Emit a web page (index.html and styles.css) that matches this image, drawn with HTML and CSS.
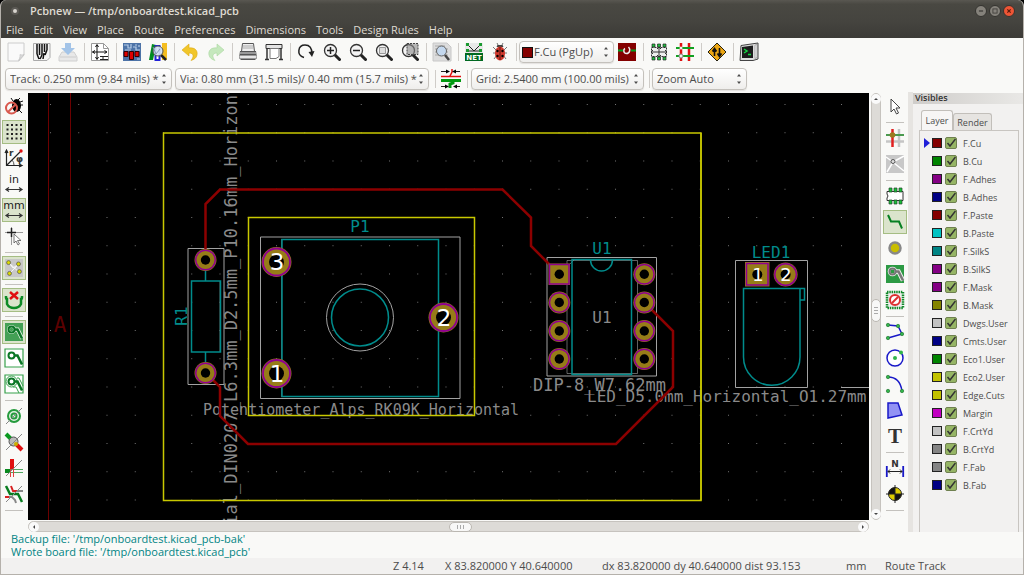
FILE: index.html
```html
<!DOCTYPE html>
<html lang="en">
<head>
<meta charset="utf-8">
<title>Pcbnew — /tmp/onboardtest.kicad_pcb</title>
<link rel="stylesheet" href="styles.css">
</head>
<body>
<svg class="defs" aria-hidden="true">
  <defs>
    <symbol id="spin" viewBox="0 0 6 12"><path d="M1 3.500 3 1l2 2.500zM1 8.500 3 11l2-2.500z" fill="#4c4c4c"/></symbol>
    <symbol id="lens" viewBox="0 0 18 18"><path d="m11.500 11.500 5 5" stroke="#222" stroke-width="3" stroke-linecap="round"/><circle cx="7.500" cy="7.500" r="6" fill="#f4f4f4" stroke="#333" stroke-width="1.300"/></symbol>
    <symbol id="track" viewBox="0 0 18 18"><circle cx="6.500" cy="6.500" r="3" fill="none" stroke-width="2"/><path d="M9.500 6.500h3l4.500 9" fill="none" stroke-width="2.500"/></symbol>
  </defs>
</svg>

<div class="window">
  <header class="titlebar">
    <span class="app-dot"></span>
    <h1 class="title">Pcbnew — /tmp/onboardtest.kicad_pcb</h1>
    <div class="window-buttons">
      <button class="wbtn" aria-label="Minimize"><svg viewBox="0 0 12 12"><path d="M3.500 6h5" stroke="#3c3b37" stroke-width="1.500"/></svg></button>
      <button class="wbtn" aria-label="Maximize"><svg viewBox="0 0 12 12"><rect x="3.500" y="3.500" width="5" height="5" fill="none" stroke="#3c3b37"/></svg></button>
      <button class="wbtn close" aria-label="Close"><svg viewBox="0 0 12 12"><path d="m4 4 4 4m0-4-4 4" stroke="#5a1a0c" stroke-width="1.400"/></svg></button>
    </div>
  </header>

  <nav class="menubar">
    <button>File</button><button>Edit</button><button>View</button><button>Place</button><button>Route</button><button>Preferences</button><button>Dimensions</button><button>Tools</button><button>Design Rules</button><button>Help</button>
  </nav>

  <div class="toolbar main-tools">
    <button class="tool" aria-label="New board"><svg viewBox="0 0 18 18"><path d="M1 0h16v12l-5 6H1z" fill="#fafafa" stroke="#ccc"/><path d="M17 11.500c-2 1-4 0-4 0 .5 3-1.500 6-1.500 6z" fill="#ddd" stroke="#bbb" stroke-width=".6"/></svg></button>
    <button class="tool" aria-label="Open board"><svg viewBox="0 0 18 18"><path d="M.5.500h16.500v14l-3 3H.5z" fill="#f4f4f4" stroke="#aaa"/><path d="M4 1v10M6.500 1v11M9 1v11M11.500 1v8M14 1v6M4 11l2 5M9 12l-2 4M11 10l-1 6M14 7l-2 5" stroke="#111" stroke-width="1.500"/></svg></button>
    <button class="tool" aria-label="Save board"><svg viewBox="0 0 18 18"><path d="m3 9-3 5v4h18v-4l-3-5z" fill="#e8e8e8" stroke="#d0d0d0"/><path d="M6 0h6v5h4l-7 7-7-7h4z" fill="#a3c4e8"/><path d="M1 14h16" stroke="#ccc"/></svg></button>
    <i class="sep"></i>
    <button class="tool" aria-label="Page settings"><svg viewBox="0 0 18 18"><path d="M.5.500h12l5 5v12H.5z" fill="#fff" stroke="#999"/><path d="M12.500.500v5h5" fill="none" stroke="#999"/><path d="M6 2v14M1.500 9h14M4.500 4 6 1.500 7.500 4m-3 10L6 16.500 7.500 14M4 7.500 1.500 9 4 10.500m9.500-3L16 9l-2.500 1.500" fill="none" stroke="#111"/><path d="M9 13.500h8m-5 0v3m-3 0h8" stroke="#222"/></svg></button>
    <i class="sep"></i>
    <button class="tool" aria-label="Footprint editor"><svg viewBox="0 0 18 18"><path d="M0 0h18v18H0z" fill="#4d73a7"/><path d="M1 2h4v3h3V1m2 3h3v3h4M12 2h2m2 0v2M2 7h6m6 9h3" fill="none" stroke="#b7cde8" stroke-width="1.200"/><path d="M1 8.500h4v5H1zM6.500 8.500h4v8h-4zM12 8.500h4v5h-4z" fill="#e00000" stroke="#300"/></svg></button>
    <button class="tool" aria-label="Footprint viewer"><svg viewBox="0 0 18 18"><path d="m3 1 4 1-3 15H0z" fill="#008a20"/><path d="M6.500 3h4v14h-4z" fill="#fff" stroke="#2222d8" stroke-width="2"/><path d="M13 0h5v17h-5z" fill="#f4bd20"/><path d="m12 12 5 5" stroke="#222" stroke-width="2.500"/><circle cx="9" cy="8" r="5" fill="#d4e4f2" fill-opacity=".9" stroke="#555"/><path d="m4 4 3 7 4-5" fill="none" stroke="#839ab5"/></svg></button>
    <i class="sep"></i>
    <button class="tool" aria-label="Undo"><svg viewBox="0 0 18 18"><path d="M1 7 8 1v4c6-1 9 3 8 7-.5 3-3 4.500-6 5.500C13 14 13 10 8 10v3z" fill="#f1c62a" stroke="#dba914" stroke-width=".6"/></svg></button>
    <button class="tool" aria-label="Redo"><svg viewBox="0 0 18 18"><path d="m17 7-7-6v4C4 4 1 8 2 12c.5 3 3 4.500 6 5.500C5 14 5 10 10 10v3z" fill="#c5e8bd" stroke="#a9d7a0" stroke-width=".6"/></svg></button>
    <i class="sep"></i>
    <button class="tool" aria-label="Print"><svg viewBox="0 0 18 18"><path d="M3.500.5h11l1 8h-13z" fill="#eee" stroke="#555"/><path d="M4 3h10M4 5h10" stroke="#aaa"/><path d="M1 8h16l1 7-2 2H2l-2-2z" fill="#555"/><path d="M1 10h16M1 13h16v2H1z" stroke="#ddd" fill="#eee"/></svg></button>
    <button class="tool" aria-label="Plot"><svg viewBox="0 0 18 18"><path d="M1 1.500h16v4H1z" fill="#e4e4e4" stroke="#333"/><path d="M5 5.500h9v8l-3 2H5z" fill="#fff" stroke="#777"/><path d="M2 6v10M16 6v10M0 16.500h4m10 0h4" stroke="#333" stroke-width="1.500"/></svg></button>
    <i class="sep"></i>
    <button class="tool" aria-label="Redraw"><svg viewBox="0 0 18 18"><path d="M7 14.500C-1 12 1 2 8 2c5 0 7 4 7 9" fill="none" stroke="#222" stroke-width="1.500"/><path d="m11.500 9 6-1-2.500 6z" fill="#222"/></svg></button>
    <button class="tool" aria-label="Zoom in"><svg viewBox="0 0 18 18"><use href="#lens"/><path d="M7.500 4v7M4 7.500h7" stroke="#222" stroke-width="1.500"/></svg></button>
    <button class="tool" aria-label="Zoom out"><svg viewBox="0 0 18 18"><use href="#lens"/><path d="M4 7.500h7" stroke="#222" stroke-width="1.500"/></svg></button>
    <button class="tool" aria-label="Zoom to fit"><svg viewBox="0 0 18 18"><use href="#lens"/><path d="M4.500 4.500h6v6h-6z" fill="#ddd" stroke="#999"/></svg></button>
    <button class="tool" aria-label="Zoom to selection"><svg viewBox="0 0 18 18"><use href="#lens"/><path d="M6 .5h11v11H6z" fill="#888" fill-opacity=".6" stroke="#444" stroke-dasharray="2 1"/></svg></button>
    <i class="sep"></i>
    <button class="tool" aria-label="Find"><svg viewBox="0 0 18 18"><path d="M0 0h14l4 4v14H0z" fill="#ddd" stroke="#c8c8c8"/><path d="M2 3h10M2 6h13M2 9h13M2 12h13" stroke="#aaa"/><path d="m12 12 4 5" stroke="#444" stroke-width="2.500"/><circle cx="8.500" cy="8" r="5" fill="#c4d8ee" stroke="#666"/></svg></button>
    <i class="sep"></i>
    <button class="tool" aria-label="Load netlist"><svg viewBox="0 0 18 18"><path d="M0 0h18v18H0z" fill="#e8e8e8"/><path d="m2 1 7 7 7-7M3 8h12" fill="none" stroke="#222"/><path d="M1 0h3v3H1zM14 0h3v3h-3zM1 6h3v3H1zM14 6h3v3h-3z" fill="#1b9a30"/><path d="M0 10h18v8H0z" fill="#006820"/><text x="9" y="17" text-anchor="middle" class="net-text">NET</text></svg></button>
    <button class="tool" aria-label="Design rules check"><svg viewBox="0 0 18 18"><path d="M2 4l3 3M16 4l-3 3M2 10h14M3 16l3-4M15 16l-3-4M6 0l2 4m4-4-2 4" stroke="#777"/><path d="M5.500 4h7l-1-2h-5z" fill="#444"/><ellipse cx="9" cy="10.500" rx="5" ry="7" fill="#d23a2e"/><path d="M9 4v13" stroke="#5d1210"/><circle cx="6.500" cy="8" r="1.200"/><circle cx="11.500" cy="8" r="1.200"/><circle cx="6.500" cy="13" r="1.200"/><circle cx="11.500" cy="13" r="1.200"/></svg></button>
    <i class="sep"></i>
    <label class="combo layer-combo"><span class="layer-chip"></span><select aria-label="Active layer"><option>F.Cu (PgUp)</option></select><svg class="spin"><use href="#spin"/></svg></label>
    <button class="tool" aria-label="Layer pair"><svg viewBox="0 0 18 18"><path d="M0 0h18v18H0z" fill="#840000"/><path d="M0 7.500h5m8 0h5" stroke="#00a020" stroke-width="2"/><path d="M7 5.500c-2 1-1.500 5 1.500 5s4.500-4 2-6.500" fill="none" stroke="#eee" stroke-width="1.500"/></svg></button>
    <i class="sep"></i>
    <button class="tool" aria-label="Footprint mode"><svg viewBox="0 0 18 18"><path d="M1.500 4.500h15v9h-15z" fill="#eee" stroke="#333" stroke-dasharray="2 1"/><path d="M2 1h3v3H2zM7.500 1h3v3h-3zM13 1h3v3h-3zM2 14h3v3H2zM7.500 14h3v3h-3zM13 14h3v3h-3z" fill="#20c040" stroke="#222" stroke-width=".7"/><path d="M9 4v10M1 9h16M3 7 1 9l2 2M15 7l2 2-2 2M7 6l2-2 2 2M7 12l2 2 2-2" fill="none" stroke="#333"/></svg></button>
    <button class="tool" aria-label="Track mode"><svg viewBox="0 0 18 18"><path d="M5 0v18M13 0v18" stroke="#e01010" stroke-width="2.500"/><path d="M0 5h18M0 13h18" stroke="#10a020" stroke-width="2"/><circle cx="5" cy="13" r="2" fill="#eee" stroke="#888"/><circle cx="5" cy="5" r="1.500" fill="#eee"/></svg></button>
    <i class="sep"></i>
    <button class="tool" aria-label="Router mode"><svg viewBox="0 0 18 18"><path d="m9 0 9 9-9 9-9-9z" fill="#eda713" stroke="#252110"/><path d="M6.500 13V6m-2 2.500 2-3 2 3M11.500 5v8m-2-2.500 2 3 2-3" fill="none" stroke="#111" stroke-width="1.600"/></svg></button>
    <i class="sep"></i>
    <button class="tool" aria-label="Scripting console"><svg viewBox="0 0 18 18"><path d="M1 2.500 18 0v16L13 17.500H0z" fill="#ddd" stroke="#444"/><path d="m2 4 11-1.500V15H2z" fill="#1c1c1c"/><path d="m15 2 2-.5v13l-2 1z" fill="#f2f2f2" stroke="#888" stroke-width=".6"/><path d="m4 6 3 2-3 2m4 1.500h3" fill="none" stroke="#16d843" stroke-width="1.500"/></svg></button>
  </div>

  <div class="toolbar option-tools">
    <label class="combo track-combo"><select aria-label="Track width"><option>Track: 0.250 mm (9.84 mils) *</option></select><svg class="spin"><use href="#spin"/></svg></label>
    <label class="combo via-combo"><select aria-label="Via size"><option>Via: 0.80 mm (31.5 mils)/ 0.40 mm (15.7 mils) *</option></select><svg class="spin"><use href="#spin"/></svg></label>
    <i class="sep"></i>
    <button class="tool" aria-label="Automatic track width"><svg viewBox="0 0 20 20"><path d="M0 7.500h20M9 7l2-4V0" fill="none" stroke="#e01010" stroke-width="1.500"/><path d="M0 11.500h20" stroke="#009a10" stroke-width="3"/><path d="M12 12v2l-3 1v4" fill="none" stroke="#009a10" stroke-width="3"/><path d="M0 2.500h6m8 0h5M0 17.500h5m9 0h5" stroke="#222"/><path d="m5 .5 4 2-4 2zM15 .5l-4 2 4 2zM4 15.500l4 2-4 2zM16 15.500l-4 2 4 2z"/></svg></button>
    <i class="sep"></i>
    <label class="combo grid-combo"><select aria-label="Grid"><option>Grid: 2.5400 mm (100.00 mils)</option></select><svg class="spin"><use href="#spin"/></svg></label>
    <i class="sep"></i>
    <label class="combo zoom-combo"><select aria-label="Zoom"><option>Zoom Auto</option></select><svg class="spin"><use href="#spin"/></svg></label>
  </div>

  <main class="workspace">
    <div class="side-tools">
      <button class="tool" aria-label="DRC off"><svg viewBox="0 0 18 18"><path d="M8 4 6 1m7 2 2-2m1 7h2m-4 5 3 3M15 5l3-1" stroke="#111"/><ellipse cx="11.500" cy="8.500" rx="4.500" ry="6.500"/><circle cx="6.500" cy="11" r="5.500" fill="none" stroke="#d8584e" stroke-width="2"/><path d="m3 15 7.500-7.500" stroke="#d8584e" stroke-width="2"/></svg></button>
      <button class="tool on" aria-label="Show grid"><svg viewBox="0 0 18 18"><path d="M1.500 2h16M1.500 6.500h16M1.500 11h16M1.500 15.500h16" stroke="#222" stroke-width="2" stroke-dasharray="2 2.500"/></svg></button>
      <button class="tool" aria-label="Polar coordinates"><svg viewBox="0 0 18 18"><path d="M1.500 17V2M0 4l1.500-3L3 4M1 16.500h15M14 15l3 1.500-3 1.500M1.500 16.500 15 3" fill="none" stroke="#222" stroke-width="1.200"/><path d="M7 11q2 2 2 5" fill="none" stroke="#555"/><circle cx="16" cy="2" r="1.700" fill="#e01010"/><text x="4" y="7" class="glyph">r</text><text x="11" y="13" class="glyph">φ</text></svg></button>
      <button class="tool" aria-label="Inches"><svg viewBox="0 0 18 18"><text x="9" y="8" text-anchor="middle" class="unit">in</text><path d="M1 14.500h16M4 12.500l-3 2 3 2m10-4 3 2-3 2" fill="none" stroke="#333" stroke-width="1.200"/></svg></button>
      <button class="tool on" aria-label="Millimeters"><svg viewBox="0 0 18 18"><text x="9" y="8" text-anchor="middle" class="unit">mm</text><path d="M1 14.500h16M4 12.500l-3 2 3 2m10-4 3 2-3 2" fill="none" stroke="#333" stroke-width="1.200"/></svg></button>
      <button class="tool" aria-label="Cursor shape"><svg viewBox="0 0 18 18"><path d="M6.500 0v18M0 5.500h18" stroke="#999"/><path d="M6.500 1v9M2 5.500h9" stroke="#222" stroke-width="1.500"/><path d="M9 7v9l2-2 2 4 1.500-1-2-3.500H16z" fill="#fff" stroke="#555" stroke-width=".8"/></svg></button>
      <i class="sep"></i>
      <button class="tool on" aria-label="Show ratsnest"><svg viewBox="0 0 20 20"><path d="M0 0h20v20H0z" fill="#c8c8c8"/><path d="m4 4 12 11M16 5 5 16M4 4l5 6 7-5" stroke="#fff" fill="none"/><g fill="#dada00" stroke="#555" stroke-width=".8"><circle cx="4" cy="4" r="2.200"/><circle cx="15" cy="5.500" r="2.200"/><circle cx="5" cy="16" r="2.200"/><circle cx="16" cy="14" r="2.200"/></g></svg></button>
      <i class="sep"></i>
      <button class="tool on" aria-label="Auto delete track"><svg viewBox="0 0 18 18"><path d="M1 5v2q0 1 1 1v5q2 4 7 4t7-4V8q1 0 1-1V5" fill="none" stroke="#0c8a25" stroke-width="2.500"/><path d="m5 1 8 7m0-7L5 8" stroke="#e01010" stroke-width="2.500"/></svg></button>
      <i class="sep"></i>
      <button class="tool on" aria-label="Show filled zones"><svg viewBox="0 0 20 20"><path d="M0 0h20v20H0z" fill="#43a055"/><circle cx="7.200" cy="7.200" r="5" fill="#e6f2e6"/><path d="M10 7.200h4l5 10" fill="none" stroke="#e6f2e6" stroke-width="4.500"/><circle cx="7.200" cy="7.200" r="2" fill="#43a055"/><use href="#track" x="0" y="0" width="20" height="20" stroke="#0a7625"/></svg></button>
      <button class="tool" aria-label="Hide filled zones"><svg viewBox="0 0 18 18"><path d="M0 0h18v18H0z" fill="#fff" stroke="#37a14c" stroke-width="1.200"/><use href="#track" width="18" height="18" stroke="#0a7625"/></svg></button>
      <button class="tool" aria-label="Outline zones"><svg viewBox="0 0 18 18"><path d="M0 0h18v18H0z" fill="#fff" stroke="#37a14c" stroke-width="1.200"/><circle cx="6.500" cy="6.500" r="5.500" fill="none" stroke="#37a14c"/><path d="M12 3h2l4 8M8 12h3l3 6" fill="none" stroke="#37a14c"/><use href="#track" width="18" height="18" stroke="#0a7625"/></svg></button>
      <i class="sep"></i>
      <button class="tool" aria-label="Via sketch"><svg viewBox="0 0 18 18"><circle cx="9" cy="9" r="6" fill="#dff0df" stroke="#259b3d" stroke-width="2"/><circle cx="9" cy="9" r="2.500" fill="none" stroke="#259b3d" stroke-width="2"/><path d="M1 17 17 1" stroke="#888"/></svg></button>
      <button class="tool" aria-label="Pad sketch"><svg viewBox="0 0 18 18"><path d="m1 1 6 6" stroke="#0a9a20" stroke-width="4"/><path d="m11 11 6 6" stroke="#e01010" stroke-width="4"/><circle cx="8.500" cy="8.500" r="4.500" fill="#bbb" stroke="#555"/><circle cx="11" cy="11" r="2" fill="#ccb000"/><path d="M1 17 17 1" stroke="#888"/></svg></button>
      <button class="tool" aria-label="Track sketch"><svg viewBox="0 0 18 18"><path d="M7 0v10" stroke="#e01010" stroke-width="4"/><path d="M0 12h5" stroke="#0a8a20" stroke-width="4"/><path d="M5 10.500h13M5 13.500h13" stroke="#50a860"/><path d="M5.500 10v8m3-8v8" stroke="#e04040"/><path d="M1 17 17 1" stroke="#888"/></svg></button>
      <button class="tool" aria-label="High contrast"><svg viewBox="0 0 18 18"><path d="M9 6h9M3 12h4l3 3 1 3" fill="none" stroke="#888" stroke-width="2"/><path d="m1 1 4 8h8l4 8" fill="none" stroke="#087d20" stroke-width="2.500"/><path d="m6 1 2 5h4M0 12h4" fill="none" stroke="#d82020" stroke-width="2"/><path d="M1 17 17 1" stroke="#888"/></svg></button>
      <i class="sep"></i>
    </div>

    <div class="board-area">
      <svg class="board" role="img" aria-label="Board layout">
        <defs>
          <pattern id="grid" x="50" y="104" width="28.250" height="28.250" patternUnits="userSpaceOnUse"><path d="M0 0h1v1H0z" fill="#777"/></pattern>
          <g id="pad"><circle r="11" fill="#967c18"/><circle r="9.800" fill="none" stroke="#900090" stroke-width="1.500"/><circle r="4.700" fill="#000"/></g>
          <g id="pad-large"><circle r="15" fill="#967c18"/><circle r="13.500" fill="none" stroke="#900090" stroke-width="1.800"/><circle r="7.500" fill="#000"/></g>
        </defs>
        <g transform="translate(-28 -93)">
          <rect x="28" y="93" width="3000" height="2000" fill="url(#grid)"/>
          <path d="M48.500 93v2000M70.500 93v2000" stroke="#6c0000"/>
          <text x="60" y="332" text-anchor="middle" class="frame-letter">A</text>

          <g class="fab">
            <path d="M188 248.500h36v136h-36zM260.500 237h199.500v161.500H260.500zM547 257.500h109.500v118.500H547zM735.500 260.500h72v127h-72zM841 387.500h28"/>
            <path d="M220 281v71M281.500 239v158M567 260.500h70.500v113H567zM567 267l7-7" opacity=".6"/>
            <circle cx="360" cy="317.500" r="33.500"/>
          </g>
          <g class="silk">
            <path d="M191.500 281h29v71h-29zM205.500 270v11m0 71v10" />
            <path d="M282 239.500h156.500v157H282zM572 259.500h59.500v115H572zM590.500 260a11 11 0 0 0 22 0"/>
            <path d="M743.500 288.500H800V357a28 28 0 0 1-56.500 0zM800 288.500h4.500V300H800"/>
            <circle cx="360" cy="317.500" r="28.500"/>
          </g>

          <g class="fab-text">
            <text x="203" y="415" class="size-s">Potentiometer_Alps_RK09K_Horizontal</text>
            <text x="533" y="391" class="size-l">DIP-8_W7.62mm</text>
            <text x="587" y="402" class="size-m">LED_D5.0mm_Horizontal_O1.27mm</text>
            <text x="602" y="323" text-anchor="middle" class="size-m">U1</text>
            <text transform="translate(237 315) rotate(-90)" text-anchor="middle" class="size-l">R_Axial_DIN0207_L6.3mm_D2.5mm_P10.16mm_Horizontal</text>
          </g>

          <path class="edge" d="M163.500 133H701v367.500H163.500zM248.500 217.500h226v198h-226z"/>
          <path class="edge" d="M701 133v367.500"/>
          <g class="copper">
            <path d="M205.500 252v-48l14.500-14.500h282.500L531 217.500V246l18 18"/>
            <path d="m212 379 8 8v29l28 28h368l57-57v-56l-22-22"/>
          </g>

          <use href="#pad" x="205.500" y="260"/><use href="#pad" x="205.500" y="373"/>
          <use href="#pad-large" x="276.500" y="262"/><use href="#pad-large" x="276.500" y="373.500"/><use href="#pad-large" x="443.500" y="317.500"/>
          <path d="M548.500 263.500h21.500v21.500h-21.500z" fill="#967c18"/><path d="M549.500 264.500h19.500v19.500h-19.500z" fill="none" stroke="#900090" stroke-width="1.500"/><circle cx="559.300" cy="274.300" r="4.700" fill="#000"/>
          <use href="#pad" x="559.300" y="302.500"/><use href="#pad" x="559.300" y="331"/><use href="#pad" x="559.300" y="359"/>
          <use href="#pad" x="644.300" y="274.300"/><use href="#pad" x="644.300" y="302.500"/><use href="#pad" x="644.300" y="331"/><use href="#pad" x="644.300" y="359"/>
          <path d="M745 262h24.500v24.500H745z" fill="#967c18"/><path d="M746.500 263.500h21.500v21.500h-21.500z" fill="none" stroke="#900090" stroke-width="1.500"/><circle cx="757.300" cy="274.500" r="5"/>
          <circle cx="785.600" cy="274.500" r="12" fill="#967c18"/><circle cx="785.600" cy="274.500" r="10.800" fill="none" stroke="#900090" stroke-width="1.500"/><circle cx="785.600" cy="274.500" r="5"/>

          <g class="pad-number" text-anchor="middle">
            <text x="277" y="270">3</text><text x="277" y="382">1</text><text x="444" y="326">2</text>
            <text x="758" y="281" class="small">1</text><text x="786" y="281" class="small">2</text>
          </g>
          <g class="silk-text" text-anchor="middle">
            <text x="360" y="232">P1</text><text x="602" y="254">U1</text><text x="771" y="258">LED1</text>
            <text transform="translate(187 316) rotate(-90)">R1</text>
          </g>
        </g>
      </svg>
      <div class="scroll vertical"><button class="arrow up" aria-label="Scroll up"></button><span class="grip"></span><button class="arrow down" aria-label="Scroll down"></button></div>
      <div class="scroll horizontal"><button class="arrow left" aria-label="Scroll left"></button><span class="grip"></span><button class="arrow right" aria-label="Scroll right"></button></div>
    </div>

    <div class="side-tools">
      <button class="tool" aria-label="Select"><svg viewBox="0 0 18 18"><path d="M5 2v13l3-3 2.500 5 2-1L10 11h4z" fill="#fff" stroke="#444"/></svg></button>
      <i class="sep"></i>
      <button class="tool" aria-label="Highlight net"><svg viewBox="0 0 18 18"><path d="M13 0v18M0 12.500h18" stroke="#c5c5c5" stroke-width="2.500"/><path d="M6.500 0v18" stroke="#e02020" stroke-width="2.500"/><path d="M0 6h18" stroke="#4a9a50" stroke-width="2"/><circle cx="6.500" cy="6" r="2.800" fill="#9b7a20"/></svg></button>
      <button class="tool" aria-label="Local ratsnest"><svg viewBox="0 0 18 18"><path d="M0 0h18v18H0z" fill="#c8c8c8"/><path d="M7 7 0 2m7 5L18 1M7 7 1 17M8 8l10 8" stroke="#fff" stroke-width="1.500"/><circle cx="7" cy="6.500" r="2" fill="#ddd" stroke="#555"/></svg></button>
      <i class="sep"></i>
      <button class="tool" aria-label="Add footprint"><svg viewBox="0 0 18 18"><path d="M1 4.500h16v9H1V11q2-2 0-4z" fill="#fff" stroke="#333"/><path d="M3 1h3v4H3zM8 1h3v4H8zM13 1h3v4h-3zM3 13h3v4H3zM8 13h3v4H8zM13 13h3v4h-3z" fill="#18c038" stroke="#26432b" stroke-width=".7"/></svg></button>
      <button class="tool on" aria-label="Route track"><svg viewBox="0 0 18 18"><path d="m2 2 3 6.500h8l3 7" fill="none" stroke="#078023" stroke-width="2"/></svg></button>
      <button class="tool" aria-label="Add via"><svg viewBox="0 0 18 18"><circle cx="9" cy="9" r="5.500" fill="#c9be00" stroke="#888" stroke-width="2.500"/></svg></button>
      <button class="tool" aria-label="Add zone"><svg viewBox="0 0 18 18"><path d="M0 0h18v18H0z" fill="#2d9a44"/><circle cx="6.500" cy="6.500" r="4.800" fill="#eee"/><path d="M9 6.500h3.500l4.500 9" fill="none" stroke="#eee" stroke-width="4.500"/><circle cx="6.500" cy="6.500" r="2" fill="#2d9a44"/><use href="#track" width="18" height="18" stroke="#777"/></svg></button>
      <button class="tool" aria-label="Add keepout"><svg viewBox="0 0 18 18"><path d="M1 1h16v16H1z" fill="#eee" stroke="#118a2a" stroke-width="2.500" stroke-dasharray="1.500 .8"/><circle cx="9" cy="9" r="5" fill="#fff" stroke="#dc3030" stroke-width="2"/><path d="m6 12 6-6" stroke="#dc3030" stroke-width="2"/></svg></button>
      <i class="sep"></i>
      <button class="tool" aria-label="Add line"><svg viewBox="0 0 18 18"><path d="m2 2 10 1 4 8-14 4" fill="none" stroke="#1818c8" stroke-width="1.500"/><g fill="#31b54b" stroke="#287a35" stroke-width=".7"><circle cx="2" cy="2" r="1.700"/><circle cx="12" cy="3" r="1.700"/><circle cx="16" cy="11" r="1.700"/><circle cx="2" cy="15" r="1.700"/></g></svg></button>
      <button class="tool" aria-label="Add circle"><svg viewBox="0 0 18 18"><circle cx="9" cy="9" r="8" fill="#fff" stroke="#1818c8" stroke-width="1.500"/><g fill="#31b54b"><circle cx="9" cy="9" r="2"/><circle cx="15" cy="3.500" r="2"/></g></svg></button>
      <button class="tool" aria-label="Add arc"><svg viewBox="0 0 18 18"><path d="M2 2q12 0 14 14" fill="none" stroke="#1818c8" stroke-width="1.500"/><g fill="#31b54b" stroke="#287a35" stroke-width=".7"><circle cx="2" cy="2" r="1.700"/><circle cx="16" cy="16" r="1.700"/><circle cx="2" cy="16" r="1.700"/></g></svg></button>
      <button class="tool" aria-label="Add polygon"><svg viewBox="0 0 18 18"><path d="M2 2h10l4 12-14 3z" fill="#9292f4" stroke="#1818c8" stroke-width="1.500"/></svg></button>
      <button class="tool" aria-label="Add text"><svg viewBox="0 0 18 18"><text x="9" y="16" text-anchor="middle" class="text-tool">T</text></svg></button>
      <i class="sep"></i>
      <button class="tool" aria-label="Add dimension"><svg viewBox="0 0 18 18"><path d="M.800 7v11M17.200 7v11" stroke="#1818c8" stroke-width="1.800"/><path d="M2 12.500h14m-12-2-2 2 2 2m10-4 2 2-2 2" fill="none" stroke="#222"/><text x="9" y="8" text-anchor="middle" class="glyph">N</text></svg></button>
      <button class="tool" aria-label="Add target"><svg viewBox="0 0 18 18"><circle cx="9" cy="9" r="6.500" fill="#dccc00"/><path d="M9 9V2.500A6.500 6.500 0 0 0 2.500 9zM9 9v6.500A6.500 6.500 0 0 0 15.500 9z" fill="#111"/><circle cx="9" cy="9" r="6.500" fill="none" stroke="#222"/><path d="M9 0v18M0 9h18" stroke="#222"/></svg></button>
      <i class="sep"></i>
    </div>
    <div class="sash"></div>

    <aside class="layers-panel">
      <h2 class="caption">Visibles</h2>
      <div class="notebook">
        <div class="tabs" role="tablist"><button role="tab" class="tab active" aria-selected="true">Layer</button><button role="tab" class="tab" aria-selected="false">Render</button></div>
        <ul class="layers">
          <li class="current"><i class="chip c-red"></i><input type="checkbox" id="l1" checked><label for="l1">F.Cu</label></li>
          <li><i class="chip c-green"></i><input type="checkbox" id="l2" checked><label for="l2">B.Cu</label></li>
          <li><i class="chip c-purple"></i><input type="checkbox" id="l3" checked><label for="l3">F.Adhes</label></li>
          <li><i class="chip c-navy"></i><input type="checkbox" id="l4" checked><label for="l4">B.Adhes</label></li>
          <li><i class="chip c-red"></i><input type="checkbox" id="l5" checked><label for="l5">F.Paste</label></li>
          <li><i class="chip c-cyan"></i><input type="checkbox" id="l6" checked><label for="l6">B.Paste</label></li>
          <li><i class="chip c-teal"></i><input type="checkbox" id="l7" checked><label for="l7">F.SilkS</label></li>
          <li><i class="chip c-purple"></i><input type="checkbox" id="l8" checked><label for="l8">B.SilkS</label></li>
          <li><i class="chip c-purple"></i><input type="checkbox" id="l9" checked><label for="l9">F.Mask</label></li>
          <li><i class="chip c-olive"></i><input type="checkbox" id="l10" checked><label for="l10">B.Mask</label></li>
          <li><i class="chip c-silver"></i><input type="checkbox" id="l11" checked><label for="l11">Dwgs.User</label></li>
          <li><i class="chip c-navy"></i><input type="checkbox" id="l12" checked><label for="l12">Cmts.User</label></li>
          <li><i class="chip c-green"></i><input type="checkbox" id="l13" checked><label for="l13">Eco1.User</label></li>
          <li><i class="chip c-yellow"></i><input type="checkbox" id="l14" checked><label for="l14">Eco2.User</label></li>
          <li><i class="chip c-yellow"></i><input type="checkbox" id="l15" checked><label for="l15">Edge.Cuts</label></li>
          <li><i class="chip c-magenta"></i><input type="checkbox" id="l16" checked><label for="l16">Margin</label></li>
          <li><i class="chip c-silver"></i><input type="checkbox" id="l17" checked><label for="l17">F.CrtYd</label></li>
          <li><i class="chip c-gray"></i><input type="checkbox" id="l18" checked><label for="l18">B.CrtYd</label></li>
          <li><i class="chip c-gray"></i><input type="checkbox" id="l19" checked><label for="l19">F.Fab</label></li>
          <li><i class="chip c-navy"></i><input type="checkbox" id="l20" checked><label for="l20">B.Fab</label></li>
        </ul>
      </div>
    </aside>
  </main>

  <section class="messages">
    <p>Backup file: '/tmp/onboardtest.kicad_pcb-bak'</p>
    <p>Wrote board file: '/tmp/onboardtest.kicad_pcb'</p>
  </section>
  <footer class="statusbar">
    <span class="st-zoom">Z 4.14</span><span class="st-abs">X 83.820000 Y 40.640000</span><span class="st-rel">dx 83.820000 dy 40.640000 dist 93.153</span><span class="st-unit">mm</span><span class="st-tool">Route Track</span>
  </footer>
</div>
</body>
</html>
```
FILE: styles.css
```css
* { box-sizing: border-box; }
body { margin: 0; background: #000; font-family: "Open Sans", "Noto Sans", sans-serif; font-size: 11px; color: #4c4c4c; }
button, select { font: inherit; color: inherit; background: none; border: 0; padding: 0; margin: 0; }
svg { display: block; }
.defs { position: absolute; width: 0; height: 0; }

.window { height: 100vh; display: flex; flex-direction: column; background: #f9f9f7; border: 1px solid #b5b1ab; border-top: 0; border-radius: 6px 6px 0 0; overflow: hidden; }

.titlebar { display: flex; align-items: center; height: 21px; padding: 0 8px 0 10px; background: linear-gradient(#595751, #494842 20%, #45443f); color: #dfdbd2; }
.app-dot { width: 8px; height: 8px; border: 2px solid #5c5a55; border-radius: 50%; background: #d8d5cf; margin-right: 11px; }
.title { margin: 0; flex: 1; font-size: 11px; font-weight: 600; line-height: 20px; }
.window-buttons { display: flex; gap: 2px; }
.wbtn { width: 12px; height: 12px; border-radius: 50%; background: #85827b; border: 1px solid #34332f; }
.wbtn svg { width: 10px; height: 10px; }
.wbtn.close { background: #ee5535; }

.menubar { display: flex; gap: 10px; height: 17px; padding-left: 5px; background: linear-gradient(#45443f, #3c3b37); color: #dfdbd2; line-height: 17px; }

.toolbar { display: flex; align-items: center; padding-left: 2px; }
.main-tools { height: 28px; }
.option-tools { height: 26px; padding-left: 4px; }
.tool { flex: none; width: 26px; height: 26px; display: grid; place-items: center; }
.tool svg { width: 18px; height: 18px; overflow: visible; }
.sep { flex: none; width: 6px; height: 18px; background: linear-gradient(#cfccc8, #cfccc8) center / 1px 100% no-repeat; }
.option-tools .tool svg { width: 20px; height: 20px; }

.combo { display: flex; align-items: center; flex: none; height: 22px; padding: 0 4px; border: 1px solid #c4c1bc; border-radius: 4px; background: linear-gradient(#fff, #efeeec); box-shadow: 0 1px 1px #e4e2df; }
.combo select { appearance: none; flex: 1; min-width: 0; outline: 0; line-height: 18px; }
.spin { flex: none; width: 6px; height: 12px; }
.layer-combo { width: 95px; padding-left: 2px; }
.layer-chip { width: 11px; height: 11px; background: #840000; border: 1px solid #111; margin-right: 1px; }
.track-combo { width: 167px; margin-right: 3px; }
.via-combo { width: 254px; margin-right: 3px; }
.grid-combo { width: 173px; margin-right: 2px; margin-left: 1px; }
.zoom-combo { width: 95px; }

.workspace { flex: 1; min-height: 0; display: flex; }
.side-tools { flex: none; width: 26px; display: flex; flex-direction: column; align-items: center; margin-top: 1px; }
.side-tools .sep { width: 18px; height: 6px; background: linear-gradient(#c4c2be, #c4c2be) center / 100% 1px no-repeat; }
.side-tools .tool.on { width: 24px; height: 24px; margin: 1px; background: #dbe4cc; border: 1px solid #a5bd83; }

.board-area { flex: 1; min-width: 0; display: grid; grid-template-columns: 1fr 13px; grid-template-rows: 1fr 12px; padding: 1px 0 0 1px; }
.board { width: 100%; height: 100%; background: #000; }
.fab { fill: none; stroke: #a2a2a2; stroke-width: 1px; }
.silk { fill: none; stroke: #008c8c; stroke-width: 1.5px; }
.edge { fill: none; stroke: #c8c800; stroke-width: 1.5px; }
.copper { fill: none; stroke: #8c0000; stroke-width: 2.5px; }
.board text { font-family: "DejaVu Sans Mono", monospace; }
.fab-text { fill: #8a8a8a; }
.size-s { font-size: 15px; }
.size-m { font-size: 16px; }
.size-l { font-size: 17px; }
.silk-text { fill: #008c8c; font-size: 16px; }
.frame-letter { font-size: 21px; fill: #5c0000; }
.pad-number { fill: #fff; font-size: 23px; }
.pad-number text { font-family: "DejaVu Sans", sans-serif; }
.pad-number .small { font-size: 18px; }

.scroll { display: flex; align-items: center; justify-content: space-between; background: #dddbd7; border: 1px solid #c6c3be; border-radius: 6px; }
.vertical { flex-direction: column; margin: 0 1px 0 2px; }
.horizontal { margin-top: 1px; }
.arrow { width: 10px; height: 10px; border-radius: 50%; background: #fafafa; display: grid; place-items: center; }
.arrow::before { content: ""; border: 2px solid transparent; }
.up::before { border-bottom-color: #444; border-top: 0; }
.down::before { border-top-color: #444; border-bottom: 0; }
.left::before { border-right-color: #444; border-left: 0; }
.right::before { border-left-color: #444; border-right: 0; }
.grip { border: 1px solid #bab7b1; border-radius: 5px; }
.horizontal .grip { width: 23px; height: 10px; margin-left: 24px; background: repeating-linear-gradient(90deg, #aaa 0 1px, #f8f8f7 1px 3px) center / 7px 4px no-repeat, #f8f8f7; }
.vertical .grip { width: 10px; height: 23px; margin-top: 8px; background: repeating-linear-gradient(#aaa 0 1px, #f8f8f7 1px 3px) center / 4px 7px no-repeat, #f8f8f7; }

.sash { flex: none; width: 5px; background: #e6e4e1; }
.layers-panel { flex: none; width: 110px; background: #f2f1f0; margin-top: 1px; display: flex; flex-direction: column; }
.caption { margin: 0; height: 11px; padding-left: 2px; font-size: 9px; font-weight: 600; line-height: 10px; background: linear-gradient(90deg, #cfcdca, #e9e8e6); color: #333; }
.notebook { flex: 1; margin: 6px 4px 0 6px; display: flex; flex-direction: column; font-size: 9px; }
.tabs { display: flex; align-items: flex-end; height: 20px; padding-left: 2px; }
.tab { height: 17px; width: 39px; border: 1px solid #c2bfba; border-bottom: 0; border-radius: 3px 3px 0 0; background: #e6e4e1; }
.tab.active { height: 20px; width: 32px; background: #f7f6f5; }
.layers { flex: 1; list-style: none; margin: 0; padding: 3px 0 0 4px; border: solid #c8c5c1; border-width: 1px 1px 0; }
.layers li { display: flex; align-items: center; height: 18px; padding-left: 8px; }
.layers li.current { padding-left: 0; }
.current::before { content: ""; border-left: 6px solid #2020d8; border-top: 5px solid transparent; border-bottom: 5px solid transparent; margin-right: 2px; }
.chip { width: 10px; height: 10px; border: 1px solid #222; margin-right: 3px; }
.layers input { appearance: none; width: 12px; height: 12px; margin: 0 6px 0 0; border: 1px solid #6f8050; border-radius: 2px; background: #96b565 url("data:image/svg+xml,%3Csvg xmlns='http://www.w3.org/2000/svg' viewBox='0 0 10 10'%3E%3Cpath d='M1.500 5 4 8l5.500-7' fill='none' stroke='%23333' stroke-width='1.500'/%3E%3C/svg%3E") center / 10px 10px no-repeat; }
.c-red { background: #840000; } .c-green { background: #008400; } .c-purple { background: #840084; } .c-navy { background: #000084; }
.c-cyan { background: #00c2c2; } .c-teal { background: #008484; } .c-olive { background: #848400; } .c-silver { background: #c2c2c2; }
.c-yellow { background: #c2c200; } .c-magenta { background: #c200c2; } .c-gray { background: #848484; }

.messages { height: 26px; padding: 0 10px; color: #008484; font-weight: 500; }
.messages p { margin: 0; line-height: 13px; }
.statusbar { display: flex; height: 16px; line-height: 16px; background: #f2f1f0; padding-left: 392px; }
.st-zoom { flex: 0 0 52px; } .st-abs { flex: 0 0 157px; } .st-rel { flex: 0 0 244px; } .st-unit { flex: 0 0 39px; }

.net-text { font: bold 7px "DejaVu Sans", sans-serif; fill: #fff; }
.board-area ~ .side-tools .glyph, .glyph { font: bold 9px "DejaVu Sans", sans-serif; fill: #333; }
.unit { font: 11px "DejaVu Sans", sans-serif; fill: #222; }
.text-tool { font: bold 21px "Liberation Serif", serif; fill: #333; }
```
